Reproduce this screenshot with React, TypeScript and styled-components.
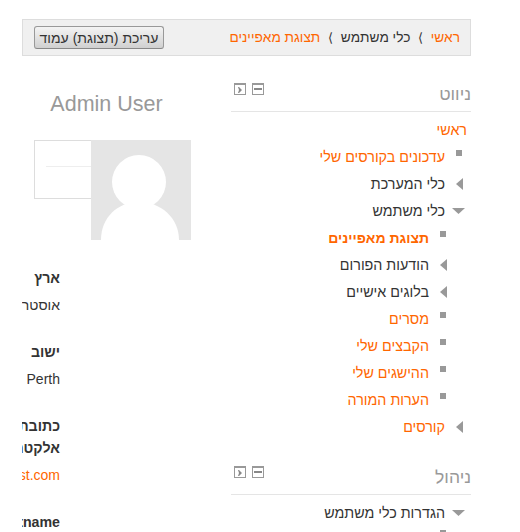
import React from 'react'
import styled, { createGlobalStyle } from 'styled-components'

const GlobalStyle = createGlobalStyle`
  html, body {
    margin: 0;
    height: 532px;
    overflow: hidden;
    background: #fff;
  }
  body {
    font-family: "Liberation Sans", Arial, sans-serif;
    font-size: 14px;
    color: #333;
  }
`

type TreeItem = {
  label: string
  level: number
  marker: 'bullet' | 'closed' | 'open' | 'none'
  link?: boolean
  current?: boolean
  tight?: boolean
}

const navItems: TreeItem[] = [
  { label: 'ראשי', level: 0, marker: 'none', link: true },
  { label: 'עדכונים בקורסים שלי', level: 1, marker: 'bullet', link: true },
  { label: 'כלי המערכת', level: 1, marker: 'closed' },
  { label: 'כלי משתמש', level: 1, marker: 'open' },
  { label: 'תצוגת מאפיינים', level: 2, marker: 'bullet', link: true, current: true },
  { label: 'הודעות הפורום', level: 2, marker: 'closed' },
  { label: 'בלוגים אישיים', level: 2, marker: 'closed' },
  { label: 'מסרים', level: 2, marker: 'bullet', link: true },
  { label: 'הקבצים שלי', level: 2, marker: 'bullet', link: true },
  { label: 'ההישגים שלי', level: 2, marker: 'bullet', link: true },
  { label: 'הערות המורה', level: 2, marker: 'bullet', link: true },
  { label: 'קורסים', level: 1, marker: 'closed', link: true },
]

const adminItems: TreeItem[] = [
  { label: 'הגדרות כלי משתמש', level: 1, marker: 'open' },
  { label: 'עריכת מאפיינים', level: 2, marker: 'bullet', link: true, tight: true },
]

const Marker = ({ kind }: { kind: TreeItem['marker'] }) => {
  if (kind === 'bullet') return <Bullet />
  if (kind === 'closed') {
    return (
      <MarkerIcon viewBox="0 0 16 16">
        <path d="M12 2v12L5 8z" fill="#999" />
      </MarkerIcon>
    )
  }
  return (
    <MarkerIcon viewBox="0 0 16 16">
      <path d="M1 5h13L7.500 11z" fill="#999" />
    </MarkerIcon>
  )
}

const Tree = ({ items }: { items: TreeItem[] }) => (
  <TreeList>
    {items.map(item => (
      <TreeRow key={item.label} level={item.level} tight={item.tight}>
        {item.marker !== 'none' && (
          <MarkerSlot>
            <Marker kind={item.marker} />
          </MarkerSlot>
        )}
        <TreeLabel link={item.link} current={item.current}>
          {item.label}
        </TreeLabel>
      </TreeRow>
    ))}
  </TreeList>
)

const BlockControls = () => (
  <Controls>
    <svg width="12" height="12" viewBox="0 0 12 12">
      <rect x="0.5" y="0.5" width="11" height="11" fill="#fff" stroke="#999" />
      <rect x="0" y="0" width="12" height="2" fill="#999" />
      <path d="M4 4h1l3 3-3 3H4l1-3z" fill="#888" />
    </svg>
    <svg width="12" height="12" viewBox="0 0 12 12">
      <rect x="0.5" y="0.5" width="11" height="11" fill="#fff" stroke="#999" />
      <rect x="0" y="0" width="12" height="2" fill="#999" />
      <rect x="2" y="5" width="8" height="2" fill="#888" />
    </svg>
  </Controls>
)

const App = () => {
  return (
    <Page dir="rtl">
      <GlobalStyle />
      <Breadcrumb>
        <Crumbs>
          <Link>ראשי</Link>
          <Separator>⟩</Separator>
          <span>כלי משתמש</span>
          <Separator>⟩</Separator>
          <Link>תצוגת מאפיינים</Link>
        </Crumbs>
        <EditButton>עריכת (תצוגת) עמוד</EditButton>
      </Breadcrumb>

      <Columns>
        <Sidebar>
          <Block>
            <BlockHeader>
              <BlockTitle>ניווט</BlockTitle>
              <BlockControls />
            </BlockHeader>
            <Tree items={navItems} />
          </Block>
          <Block>
            <BlockHeader>
              <BlockTitle>ניהול</BlockTitle>
              <BlockControls />
            </BlockHeader>
            <Tree items={adminItems} />
          </Block>
        </Sidebar>

        <Profile>
          <UserName>Admin User</UserName>
          <UserCard>
            <Avatar viewBox="0 0 100 100">
              <rect width="100" height="100" fill="#e5e5e5" />
              <circle cx="48" cy="42" r="27" fill="#fff" />
              <path d="M10 100C10 78 26 62 48 62s40 16 40 38z" fill="#fff" />
            </Avatar>
            <CardBox>
              <CardLine />
            </CardBox>
          </UserCard>
          <Details>
            <Term>ארץ</Term>
            <Value>אוסטרליה</Value>
            <Term>ישוב</Term>
            <Value>Perth</Value>
            <Term>כתובת אלקטרונית</Term>
            <Value>
              <EmailLink>admin@test.com</EmailLink>
            </Value>
            <Term>Firstname</Term>
            <Value>Admin</Value>
          </Details>
        </Profile>
      </Columns>
    </Page>
  )
}

export default App

const Page = styled.div`
  width: 449px;
  margin: 19px 0 0 22px;
`

const Breadcrumb = styled.div`
  display: flex;
  justify-content: space-between;
  align-items: center;
  box-sizing: border-box;
  height: 37px;
  padding: 0 10px 0 11px;
  background: #f0f0f0;
  border: 1px solid #ddd;
`

const Crumbs = styled.div`
  display: flex;
  align-items: center;
  gap: 7.75px;
  font-size: 13.7px;
`

const Link = styled.span`
  color: #f60;
`

const Separator = styled.span`
  color: #333;
  font-size: 13px;
`

const EditButton = styled.button`
  box-sizing: border-box;
  width: 130px;
  height: 23px;
  padding: 0;
  font: 14px "Liberation Sans", Arial, sans-serif;
  color: #333;
  background: linear-gradient(#f4f4f4, #d0d0d0);
  border: 1px solid #999;
  border-bottom-color: #888;
  border-radius: 3px;
`

const Columns = styled.div`
  display: flex;
  gap: 40px;
  margin-top: 20px;
`

const Sidebar = styled.div`
  flex: 0 0 240px;
  display: flex;
  flex-direction: column;
  gap: 19px;
`

const Block = styled.section``

const BlockHeader = styled.div`
  display: flex;
  justify-content: space-between;
  height: 35px;
  border-bottom: 1px solid #e5e5e5;
`

const BlockTitle = styled.h2`
  margin: 7px 0 0;
  font-size: 17.5px;
  line-height: 22px;
  font-weight: normal;
  color: #999;
`

const Controls = styled.div`
  display: flex;
  flex-direction: row-reverse;
  gap: 6px;
  margin: 7px 0 0 3px;
  height: 12px;
`

const TreeList = styled.ul`
  list-style: none;
  margin: 4px 0 0;
  padding: 0;
`

const TreeRow = styled.li<{ level: number; tight?: boolean }>`
  display: flex;
  align-items: center;
  height: 27px;
  margin-top: ${props => (props.tight ? -3 : 0)}px;
  padding-right: ${props => (props.level < 2 ? 4 : 20)}px;
`

const MarkerSlot = styled.span`
  flex: 0 0 22px;
  display: flex;
  align-items: center;
  height: 16px;
`

const Bullet = styled.span`
  width: 6px;
  height: 6px;
  margin: -7px 5px 0 0;
  background: #999;
`

const MarkerIcon = styled.svg`
  width: 16px;
  height: 16px;
`

const TreeLabel = styled.span<{ link?: boolean; current?: boolean }>`
  color: ${props => (props.link ? '#f60' : '#333')};
  font-size: ${props => (props.current ? 14 : 14.3)}px;
  font-weight: ${props => (props.current ? 'bold' : 'normal')};
  line-height: 22px;
  white-space: nowrap;
`

const Profile = styled.div`
  flex: 0 0 169px;
  width: 169px;
  overflow: hidden;
`

const UserName = styled.h2`
  margin: 13px 0 0;
  font-size: 21.5px;
  line-height: 30px;
  font-weight: normal;
  color: #999;
  text-align: center;
`

const UserCard = styled.div`
  display: flex;
  align-items: flex-start;
  margin-top: 21px;
`

const Avatar = styled.svg`
  flex: 0 0 100px;
  width: 100px;
  height: 100px;
`

const CardBox = styled.div`
  box-sizing: border-box;
  width: 57px;
  height: 59px;
  padding-left: 11px;
  border: 1px solid #ddd;
  border-right: 0;
`

const CardLine = styled.div`
  height: 25px;
  border-bottom: 1px solid #eee;
`

const Details = styled.dl`
  width: 38px;
  margin: 27px 131px 0 0;
`

const Term = styled.dt`
  font-size: 14.2px;
  font-weight: bold;
  line-height: 22px;
  width: 38px;
`

const Value = styled.dd`
  margin: 5px 0 25px;
  line-height: 22px;
  white-space: nowrap;
`

const EmailLink = styled.span`
  color: #f60;
`
